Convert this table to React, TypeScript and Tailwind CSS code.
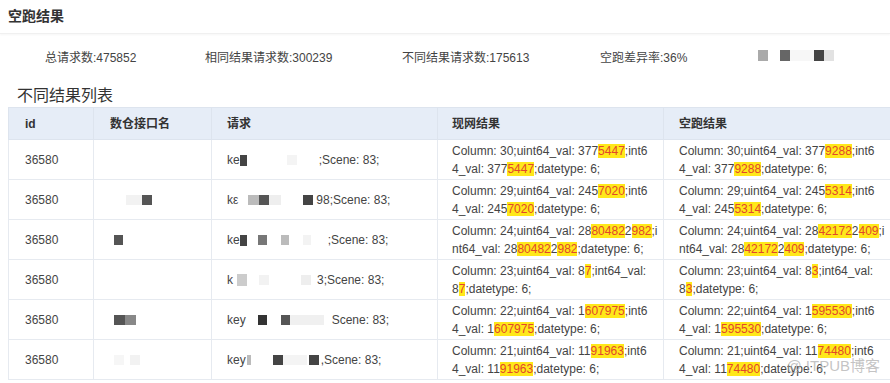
import { FC, ReactElement, ReactNode } from "react";

type Seg = string | { h: string };

type Row = {
  id: string;
  name: ReactNode;
  req: ReactNode;
  live: [Seg[], Seg[]];
  dry: [Seg[], Seg[]];
};

const Blk: FC<{ c: string; w?: number; h?: number; ml?: number }> = ({ c, w = 9, h = 10, ml = 0 }) => (
  <span
    className="inline-block align-middle"
    style={{ width: w, height: h, background: c, marginLeft: ml }}
  />
);

const Hl: FC<{ children: ReactNode }> = ({ children }) => (
  <span className="bg-[#ffe81a] text-[#e2472a]">{children}</span>
);

const Line: FC<{ segs: Seg[] }> = ({ segs }) => (
  <div className="whitespace-nowrap">
    {segs.map((s, i) => (typeof s === "string" ? <span key={i}>{s}</span> : <Hl key={i}>{s.h}</Hl>))}
  </div>
);

const rows: Row[] = [
  {
    id: "36580",
    name: null,
    req: (
      <>
        ke<Blk c="#444" w={7} h={11} />
        <Blk c="#f4f4f4" w={10} ml={40} />
        <span className="ml-[22px]">;Scene: 83;</span>
      </>
    ),
    live: [["Column: 30;uint64_val: 377", { h: "5447" }, ";int6"], ["4_val: 377", { h: "5447" }, ";datetype: 6;"]],
    dry: [["Column: 30;uint64_val: 377", { h: "9288" }, ";int6"], ["4_val: 377", { h: "9288" }, ";datetype: 6;"]],
  },
  {
    id: "36580",
    name: (
      <span className="pl-4">
        <Blk c="#f2f2f2" w={16} />
        <Blk c="#555" w={10} />
      </span>
    ),
    req: (
      <>
        kε<Blk c="#bbb" w={11} ml={10} />
        <Blk c="#555" w={10} />
        <Blk c="#eee" w={12} />
        <Blk c="#444" w={10} ml={22} />
        <span className="ml-[3px]">98;Scene: 83;</span>
      </>
    ),
    live: [["Column: 29;uint64_val: 245", { h: "7020" }, ";int6"], ["4_val: 245", { h: "7020" }, ";datetype: 6;"]],
    dry: [["Column: 29;uint64_val: 245", { h: "5314" }, ";int6"], ["4_val: 245", { h: "5314" }, ";datetype: 6;"]],
  },
  {
    id: "36580",
    name: (
      <span className="pl-[4px]">
        <Blk c="#555" w={9} />
      </span>
    ),
    req: (
      <>
        ke<Blk c="#444" w={7} h={11} />
        <Blk c="#777" w={9} ml={11} />
        <Blk c="#bbb" w={8} ml={14} />
        <Blk c="#f3f3f3" w={8} ml={14} />
        <span className="ml-[17px]">;Scene: 83;</span>
      </>
    ),
    live: [
      ["Column: 24;uint64_val: 28", { h: "80482" }, "2", { h: "982" }, ";i"],
      ["nt64_val: 28", { h: "80482" }, "2", { h: "982" }, ";datetype: 6;"],
    ],
    dry: [
      ["Column: 24;uint64_val: 28", { h: "42172" }, "2", { h: "409" }, ";i"],
      ["nt64_val: 28", { h: "42172" }, "2", { h: "409" }, ";datetype: 6;"],
    ],
  },
  {
    id: "36580",
    name: null,
    req: (
      <>
        k<Blk c="#ccc" w={10} h={12} ml={4} />
        <Blk c="#f2f2f2" w={10} ml={12} />
        <Blk c="#eee" w={10} ml={32} />
        <span className="ml-[6px]">3;Scene: 83;</span>
      </>
    ),
    live: [["Column: 23;uint64_val: 8", { h: "7" }, ";int64_val:"], ["8", { h: "7" }, ";datetype: 6;"]],
    dry: [["Column: 23;uint64_val: 8", { h: "3" }, ";int64_val:"], ["8", { h: "3" }, ";datetype: 6;"]],
  },
  {
    id: "36580",
    name: (
      <span className="pl-[4px]">
        <Blk c="#555" w={11} />
        <Blk c="#888" w={11} />
      </span>
    ),
    req: (
      <>
        key<Blk c="#333" w={9} ml={12} />
        <Blk c="#555" w={9} ml={14} />
        <Blk c="#f0f0f0" w={34} />
        <span className="ml-[8px]">Scene: 83;</span>
      </>
    ),
    live: [["Column: 22;uint64_val: 1", { h: "607975" }, ";int6"], ["4_val: 1", { h: "607975" }, ";datetype: 6;"]],
    dry: [["Column: 22;uint64_val: 1", { h: "595530" }, ";int6"], ["4_val: 1", { h: "595530" }, ";datetype: 6;"]],
  },
  {
    id: "36580",
    name: (
      <span className="pl-[4px]">
        <Blk c="#f6f6f6" w={10} />
        <Blk c="#f2f2f2" w={10} ml={6} />
      </span>
    ),
    req: (
      <>
        key<Blk c="#bbb" w={4} ml={1} />
        <Blk c="#444" w={10} ml={22} />
        <Blk c="#f4f4f4" w={24} />
        <Blk c="#444" w={10} ml={2} />
        <span className="ml-[2px]">,Scene: 83;</span>
      </>
    ),
    live: [["Column: 21;uint64_val: 11", { h: "91963" }, ";int6"], ["4_val: 11", { h: "91963" }, ";datetype: 6;"]],
    dry: [["Column: 21;uint64_val: 11", { h: "74480" }, ";int6"], ["4_val: 11", { h: "74480" }, ";datetype: 6;"]],
  },
];

const App: FC = (): ReactElement => {
  return (
    <div
      className="relative w-[890px] h-[383px] overflow-hidden bg-white text-[#333]"
      style={{ fontFamily: '"Liberation Sans", "Noto Sans CJK SC", sans-serif' }}
    >
      <div className="h-[34px] pl-2 flex items-center text-[14px] font-bold text-[#333] border-b border-[#f0f0f0] shadow-[0_1px_2px_rgba(0,0,0,0.04)]">
        空跑结果
      </div>
      <div className="h-[48px] pl-[45px] flex items-center text-[12px] text-[#444]">
        <span className="w-[160px]">总请求数:475852</span>
        <span className="w-[197px]">相同结果请求数:300239</span>
        <span className="w-[198px]">不同结果请求数:175613</span>
        <span className="w-[158px]">空跑差异率:36%</span>
        <span className="flex items-center -mt-[5px]">
          <Blk c="#aaa" w={10} h={11} />
          <Blk c="#666" w={10} h={11} ml={12} />
          <Blk c="#f7f7f7" w={24} h={11} />
          <Blk c="#444" w={10} h={11} ml={0} />
          <Blk c="#e2e2e2" w={10} h={11} />
        </span>
      </div>
      <div className="h-[25px] pl-[17px] pt-[3px] flex items-center text-[16px] text-[#333]">不同结果列表</div>
      <table className="ml-2 w-[890px] table-fixed border-collapse text-[12px]">
        <colgroup>
          <col className="w-[85px]" />
          <col className="w-[118px]" />
          <col className="w-[226px]" />
          <col className="w-[226px]" />
          <col className="w-[235px]" />
        </colgroup>
        <thead>
          <tr className="h-[32px] bg-[#e6edf7] text-left font-bold text-[#333]">
            <th className="px-4 border border-[#dde4ee]">id</th>
            <th className="px-4 border border-[#dde4ee]">数仓接口名</th>
            <th className="px-[15px] border border-[#dde4ee]">请求</th>
            <th className="px-[14px] border border-[#dde4ee]">现网结果</th>
            <th className="px-[15px] border border-[#dde4ee]">空跑结果</th>
          </tr>
        </thead>
        <tbody className="text-[#444]">
          {rows.map((r, i) => (
            <tr key={i} className="h-[40px]">
              <td className="px-4 border border-[#e6eaf0]">{r.id}</td>
              <td className="px-4 border border-[#e6eaf0] whitespace-nowrap">{r.name}</td>
              <td className="px-[15px] border border-[#e6eaf0] whitespace-nowrap">{r.req}</td>
              <td className="px-[14px] py-0 border border-[#e6eaf0] leading-[18px]">
                <Line segs={r.live[0]} />
                <Line segs={r.live[1]} />
              </td>
              <td className="px-[15px] py-0 border border-[#e6eaf0] leading-[18px]">
                <Line segs={r.dry[0]} />
                <Line segs={r.dry[1]} />
              </td>
            </tr>
          ))}
        </tbody>
      </table>
      <div className="absolute right-[10px] bottom-[6px] text-[15px] text-[#aaa]/70">@ ITPUB博客</div>
    </div>
  );
};

export default App;
